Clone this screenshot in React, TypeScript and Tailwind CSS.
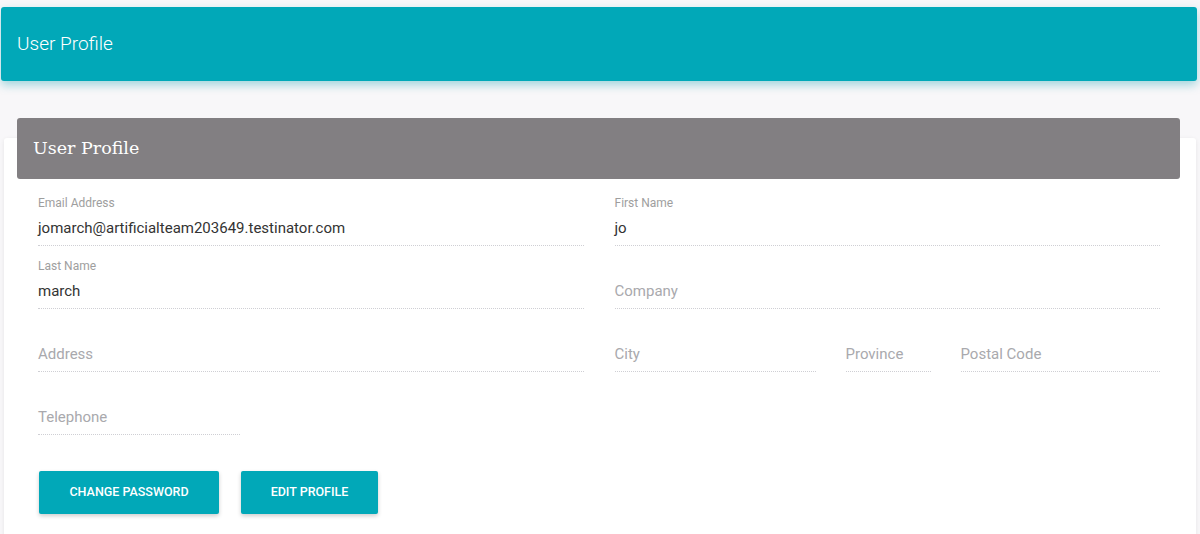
import React from "react";

function Field({ label, value, placeholder, className = "" }: { label?: string; value?: string; placeholder?: string; className?: string }) {
  return (
    <div className={`flex flex-col ${className}`}>
      <div className="h-[14px] text-[12px] leading-[14px] text-[#9e9e9e]">{label ?? ""}</div>
      <div className="mt-2 pb-[7px] border-b border-dotted border-[#cfcfd4]">
        <div className={`h-[20px] text-[15px] leading-[20px] ${value ? "text-[#333333]" : "text-[#a9a9ad]"}`}>
          {value ?? placeholder}
        </div>
      </div>
    </div>
  );
}

export default function App() {
  return (
    <div className="min-h-[534px] bg-[#f8f7f9] pt-[7px] pl-px pr-[3px] font-['Roboto',sans-serif] overflow-hidden">
      <header className="h-[74px] rounded-[3px] bg-[#01a8b8] shadow-[0_4px_10px_rgba(0,150,170,0.35)] flex items-center pl-4 text-white text-[19px] font-light">
        User Profile
      </header>
      <div className="mt-[57px] ml-[3px] mr-px bg-white rounded-[3px] shadow-[0_1px_4px_rgba(0,0,0,0.08)] h-[400px]">
        <div className="-translate-y-5 ml-[13px] mr-[16px] h-[61px] rounded-[3px] bg-[#827f82] flex items-center pl-4 text-white text-[17.5px] font-['DejaVu_Serif',serif]">
          User Profile
        </div>
        <div className="-mt-[3px] pl-[34px] pr-[36px]">
          <div className="grid grid-cols-2 gap-x-[31px] gap-y-[13px]">
            <Field label="Email Address" value="jomarch@artificialteam203649.testinator.com" />
            <Field label="First Name" value="jo" />
            <Field label="Last Name" value="march" />
            <Field placeholder="Company" />
            <Field placeholder="Address" />
            <div className="flex gap-[30px]">
              <Field placeholder="City" className="w-[201px]" />
              <Field placeholder="Province" className="w-[85px]" />
              <Field placeholder="Postal Code" className="flex-1" />
            </div>
            <Field placeholder="Telephone" className="w-[202px]" />
          </div>
          <div className="mt-[36px] flex gap-[22px] pl-px">
            <button className="h-[43px] w-[180px] rounded-[2px] bg-[#01a8b8] text-white text-[12.5px] font-medium uppercase shadow-[0_2px_4px_rgba(0,0,0,0.2)]">
              Change Password
            </button>
            <button className="h-[43px] w-[137px] rounded-[2px] bg-[#01a8b8] text-white text-[12.5px] font-medium uppercase shadow-[0_2px_4px_rgba(0,0,0,0.2)]">
              Edit Profile
            </button>
          </div>
        </div>
      </div>
    </div>
  );
}
